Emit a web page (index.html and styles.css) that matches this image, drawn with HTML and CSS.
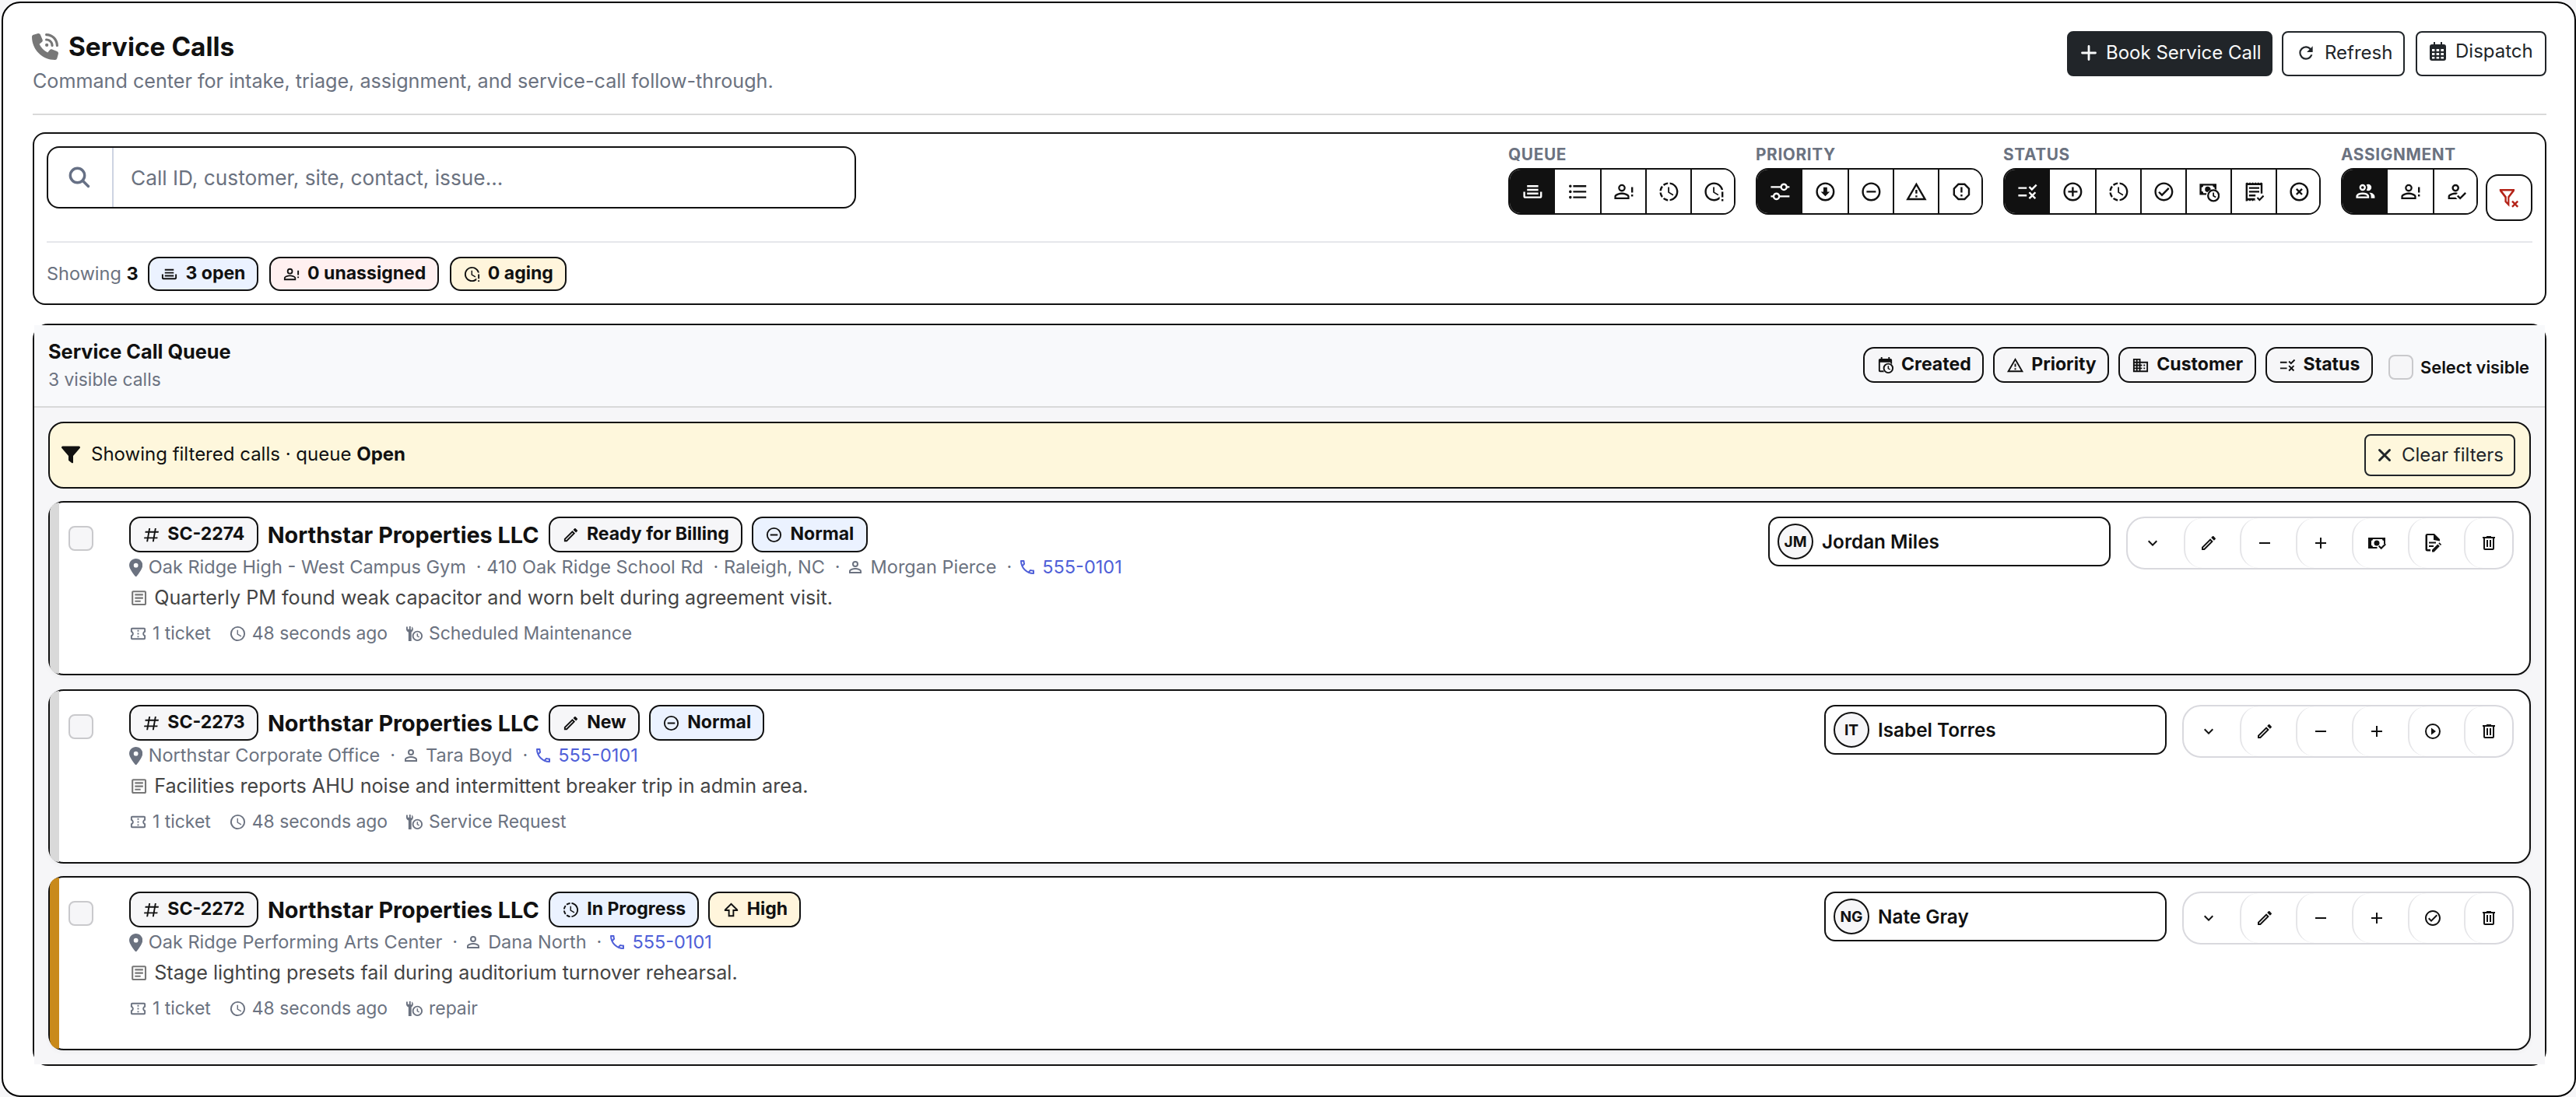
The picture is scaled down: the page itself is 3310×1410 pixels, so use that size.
FILE: index.html
```html
<!DOCTYPE html>
<html lang="en">
  <head>
    <meta charset="UTF-8" />
    <meta name="viewport" content="width=device-width, initial-scale=1" />
    <title>Service Calls</title>
    <link rel="stylesheet" href="styles.css">
  </head>
  <body>
    <!-- icon sprite -->
    <svg class="sprite" xmlns="http://www.w3.org/2000/svg">
      <symbol id="i-phone-volume" viewBox="0 0 512 512"><path d="M280 0C408.1 0 512 103.9 512 232c0 13.3-10.7 24-24 24s-24-10.7-24-24c0-101.6-82.4-184-184-184c-13.3 0-24-10.7-24-24s10.7-24 24-24zm8 192a32 32 0 1 1 0 64 32 32 0 1 1 0-64zm-32-72c0-13.3 10.7-24 24-24c75.1 0 136 60.9 136 136c0 13.3-10.7 24-24 24s-24-10.7-24-24c0-48.6-39.4-88-88-88c-13.3 0-24-10.7-24-24zM117.5 1.4c19.4-5.3 39.7 4.6 47.4 23.2l40 96c6.8 16.3 2.1 35.2-11.6 46.3L144 207.3c33.3 70.4 90.3 127.4 160.7 160.7L345 318.7c11.2-13.7 30-18.4 46.3-11.6l96 40c18.6 7.7 28.5 28 23.2 47.4l-24 88C481.8 499.9 466 512 448 512C200.6 512 0 311.4 0 64C0 46 12.1 30.2 29.5 25.4l88-24z"/></symbol>
      <symbol id="i-plus-lg" viewBox="0 0 20 20"><path d="M10 1.5v17M1.5 10h17" fill="none" stroke="currentColor" stroke-width="2.8" stroke-linecap="round"/></symbol>
      <symbol id="i-refresh" viewBox="0 0 24 24"><path d="M17.65,6.35C16.2,4.9 14.21,4 12,4A8,8 0 0,0 4,12A8,8 0 0,0 12,20C15.73,20 18.84,17.45 19.73,14H17.65C16.83,16.33 14.61,18 12,18A6,6 0 0,1 6,12A6,6 0 0,1 12,6C13.66,6 15.14,6.69 16.22,7.78L13,11H20V4L17.65,6.35Z"/></symbol>
      <symbol id="i-calendar-days" viewBox="0 0 21 24"><path fill-rule="evenodd" d="M5 0h2v3h7V0h2v3h2a3 3 0 0 1 3 3v15a3 3 0 0 1-3 3H3a3 3 0 0 1-3-3V6a3 3 0 0 1 3-3h2zM3 9v3h3.4V9zm5.6 0v3h3.6V9zm5.8 0v3H18V9zM3 14v3h3.4v-3zm5.6 0v3h3.6v-3zm5.8 0v3H18v-3zM3 19v2.6h3.4V19zm5.6 0v2.6h3.6V19zm5.8 0v2.6H18V19z"/></symbol>
      <symbol id="i-search" viewBox="0 0 28 28"><g fill="none" stroke="currentColor" stroke-width="3.4" stroke-linecap="round"><circle cx="11.5" cy="11.5" r="9.2"/><path d="M18.5 18.5l7 7"/></g></symbol>
      <symbol id="i-tray" viewBox="0 0 24 24"><path d="M18 5H6V7H18M6 9H18V11H6M2 12H4V17H20V12H22V17C22 18.11 21.11 19 20 19H4C2.9 19 2 18.11 2 17M18 13H6V15H18Z"/></symbol>
      <symbol id="i-list" viewBox="0 0 24 24"><path d="M7,5H21V7H7V5M7,13V11H21V13H7M4,4.5A1.5,1.5 0 0,1 5.5,6A1.5,1.5 0 0,1 4,7.5A1.5,1.5 0 0,1 2.5,6A1.5,1.5 0 0,1 4,4.5M4,10.5A1.5,1.5 0 0,1 5.5,12A1.5,1.5 0 0,1 4,13.5A1.5,1.5 0 0,1 2.5,12A1.5,1.5 0 0,1 4,10.5M7,19V17H21V19H7M4,16.5A1.5,1.5 0 0,1 5.5,18A1.5,1.5 0 0,1 4,19.5A1.5,1.5 0 0,1 2.5,18A1.5,1.5 0 0,1 4,16.5Z"/></symbol>
      <symbol id="i-account-alert" viewBox="0 0 24 24"><path d="M20 12V7H22V13H20M20 17H22V15H20M10 13C12.67 13 18 14.34 18 17V20H2V17C2 14.34 7.33 13 10 13M10 4A4 4 0 0 1 14 8A4 4 0 0 1 10 12A4 4 0 0 1 6 8A4 4 0 0 1 10 4M10 14.9C7.03 14.9 3.9 16.36 3.9 17V18.1H16.1V17C16.1 16.36 12.97 14.9 10 14.9M10 5.9A2.1 2.1 0 0 0 7.9 8A2.1 2.1 0 0 0 10 10.1A2.1 2.1 0 0 0 12.1 8A2.1 2.1 0 0 0 10 5.9Z"/></symbol>
      <symbol id="i-progress-clock" viewBox="0 0 24 24"><path d="M13,2.03V2.05L13,4.05C17.39,4.59 20.5,8.58 19.96,12.97C19.5,16.61 16.64,19.5 13,19.93V21.93C18.5,21.38 22.5,16.5 21.95,11C21.5,6.25 17.73,2.5 13,2.03M11,2.06C9.05,2.25 7.19,3 5.67,4.26L7.1,5.74C8.22,4.84 9.57,4.26 11,4.06V2.06M4.26,5.67C3,7.19 2.25,9.04 2.05,11H4.05C4.24,9.58 4.8,8.23 5.69,7.1L4.26,5.67M2.06,13C2.26,14.96 3.03,16.81 4.27,18.33L5.69,16.9C4.81,15.77 4.24,14.42 4.06,13H2.06M7.1,18.37L5.67,19.74C7.18,21 9.04,21.79 11,22V20C9.58,19.82 8.23,19.25 7.1,18.37M12.5,7V12.25L17,14.92L16.25,16.15L11,13V7H12.5Z"/></symbol>
      <symbol id="i-clock-alert" viewBox="0 0 24 24"><path d="M11 7V13L16.2 16.1L17 14.9L12.5 12.2V7H11M20 12V18H22V12H20M20 20V22H22V20H20M18 20C16.3 21.3 14.3 22 12 22C6.5 22 2 17.5 2 12S6.5 2 12 2C16.8 2 20.9 5.4 21.8 10H19.7C18.8 6.6 15.7 4 12 4C7.6 4 4 7.6 4 12S7.6 20 12 20C14.4 20 16.5 18.9 18 17.3V20Z"/></symbol>
      <symbol id="i-tune" viewBox="0 0 24 24"><path d="M8 13C6.14 13 4.59 14.28 4.14 16H2V18H4.14C4.59 19.72 6.14 21 8 21S11.41 19.72 11.86 18H22V16H11.86C11.41 14.28 9.86 13 8 13M8 19C6.9 19 6 18.1 6 17C6 15.9 6.9 15 8 15S10 15.9 10 17C10 18.1 9.1 19 8 19M19.86 6C19.41 4.28 17.86 3 16 3S12.59 4.28 12.14 6H2V8H12.14C12.59 9.72 14.14 11 16 11S19.41 9.72 19.86 8H22V6H19.86M16 9C14.9 9 14 8.1 14 7C14 5.9 14.9 5 16 5S18 5.9 18 7C18 8.1 17.1 9 16 9Z"/></symbol>
      <symbol id="i-down-circle" viewBox="0 0 24 24"><circle cx="12" cy="12" r="9" fill="none" stroke="currentColor" stroke-width="2"/><path d="M10 7.2h4v4.8h2.8L12 16.9 7.2 12H10z"/></symbol>
      <symbol id="i-minus-circle" viewBox="0 0 24 24"><path d="M12,20C7.59,20 4,16.41 4,12C4,7.59 7.59,4 12,4C16.41,4 20,7.59 20,12C20,16.41 16.41,20 12,20M12,2A10,10 0 0,0 2,12A10,10 0 0,0 12,22A10,10 0 0,0 22,12A10,10 0 0,0 12,2M7,13H17V11H7"/></symbol>
      <symbol id="i-plus-circle" viewBox="0 0 24 24"><path d="M12,20C7.59,20 4,16.41 4,12C4,7.59 7.59,4 12,4C16.41,4 20,7.59 20,12C20,16.41 16.41,20 12,20M12,2A10,10 0 0,0 2,12A10,10 0 0,0 12,22A10,10 0 0,0 22,12A10,10 0 0,0 12,2M13,7H11V11H7V13H11V17H13V13H17V11H13V7Z"/></symbol>
      <symbol id="i-alert" viewBox="0 0 24 24"><path d="M12,2L1,21H23M12,6L19.53,19H4.47M11,10V14H13V10M11,16V18H13V16"/></symbol>
      <symbol id="i-octagon" viewBox="0 0 24 24"><path d="M8.27,3L3,8.27V15.73L8.27,21H15.73L21,15.73V8.27L15.73,3M9.1,5H14.9L19,9.1V14.9L14.9,19H9.1L5,14.9V9.1M11,15H13V17H11V15M11,7H13V13H11V7"/></symbol>
      <symbol id="i-list-status" viewBox="0 0 24 24"><path d="M16.5 11L13 7.5L14.4 6.1L16.5 8.2L20.7 4L22.1 5.4L16.5 11M11 7H2V9H11V7M21 13.4L19.6 12L17 14.6L14.4 12L13 13.4L15.6 16L13 18.6L14.4 20L17 17.4L19.6 20L21 18.6L18.4 16L21 13.4M11 15H2V17H11V15Z"/></symbol>
      <symbol id="i-check-circle" viewBox="0 0 24 24"><path d="M12 2C6.5 2 2 6.5 2 12S6.5 22 12 22 22 17.5 22 12 17.5 2 12 2M12 20C7.59 20 4 16.41 4 12S7.59 4 12 4 20 7.59 20 12 16.41 20 12 20M16.59 7.58L10 14.17L7.41 11.59L6 13L10 17L18 9L16.59 7.58Z"/></symbol>
      <symbol id="i-cash-clock" viewBox="0 0 24 24"><path fill-rule="evenodd" d="M2 3.5h18v6.4a7.6 7.6 0 0 0-2-.7V7.5a2 2 0 0 1-2-2H6a2 2 0 0 1-2 2v4a2 2 0 0 1 2 2h3.4a8 8 0 0 0-.3 2H2zM11 6.5a3 3 0 0 1 2.8 3.7 7.6 7.6 0 0 0-3.4 2.3A3 3 0 0 1 11 6.5z"/><circle cx="16.8" cy="16.2" r="5.8" fill="none" stroke="currentColor" stroke-width="1.9"/><path d="M16 13h1.5v3l2.2 1.3-.8 1.2-2.9-1.7z"/></symbol>
      <symbol id="i-invoice-check" viewBox="0 0 24 24"><path fill-rule="evenodd" d="M3 22V3l1.4-1 1.6 1 1.5-1L9 3l1.5-1L12 3l1.5-1L15 3l1.5-1L18 3l1.5-1L21 3v11h-2V5H5v14h8v3l-1-1-1.5 1L9 21l-1.5 1L6 21l-1.5 1zM6.5 7h11v2h-11zm0 4h11v2h-11zm0 4h7v2h-7z"/><path d="M17.8 22l-3-3.1 1.2-1.2 1.8 1.8 3.7-3.8 1.2 1.4z"/></symbol>
      <symbol id="i-close-circle" viewBox="0 0 24 24"><circle cx="12" cy="12" r="9" fill="none" stroke="currentColor" stroke-width="2"/><path d="M9 9l6 6M15 9l-6 6" stroke="currentColor" stroke-width="2"/></symbol>
      <symbol id="i-accounts" viewBox="0 0 24 24"><path d="M13.07 10.41A5 5 0 0 0 13.07 4.59A3.39 3.39 0 0 1 15 4A3.5 3.5 0 0 1 15 11A3.39 3.39 0 0 1 13.07 10.41M5.5 7.5A3.5 3.5 0 1 1 9 11A3.5 3.5 0 0 1 5.5 7.5M7.5 7.5A1.5 1.5 0 1 0 9 6A1.5 1.5 0 0 0 7.5 7.5M16 17V19H2V17S2 13 9 13 16 17 16 17M14 17C13.86 16.22 12.67 15 9 15S4.07 16.31 4 17M15.95 13A5.32 5.32 0 0 1 18 17V19H22V17S22 13.37 15.94 13Z"/></symbol>
      <symbol id="i-account-check" viewBox="0 0 24 24"><path d="M21.1 12.5L22.5 13.91L15.97 20.5L12.5 17L13.9 15.59L15.97 17.67L21.1 12.5M11 4A4 4 0 0 1 15 8A4 4 0 0 1 11 12A4 4 0 0 1 7 8A4 4 0 0 1 11 4M11 6A2 2 0 0 0 9 8A2 2 0 0 0 11 10A2 2 0 0 0 13 8A2 2 0 0 0 11 6M11 13C11.68 13 12.5 13.09 13.41 13.26L11.74 14.93L11 14.9C8.03 14.9 4.9 16.36 4.9 17V18.1H11.1L13 20H3V17C3 14.34 8.33 13 11 13Z"/></symbol>
      <symbol id="i-filter-remove" viewBox="0 0 24 24"><path fill-rule="evenodd" d="M1.5 2.5h16v2.1L12 11.7v9.8l-5-5.2v-4.6L1.5 4.6zm2.8 2L9 10.6v4.9l1.2 1.2v-6l4.6-6.2z"/><path d="M15 15.5l6 6M21 15.5l-6 6" stroke="currentColor" stroke-width="2"/></symbol>
      <symbol id="i-calendar-clock" viewBox="0 0 24 24"><path fill-rule="evenodd" d="M6 1h2v2h8V1h2v2h1a2 2 0 0 1 2 2v5.7a7.2 7.2 0 0 0-2-1.2V8H5v11h4.3a7 7 0 0 0 1.2 2H5a2 2 0 0 1-2-2V5a2 2 0 0 1 2-2h1z"/><circle cx="16" cy="16" r="6" fill="none" stroke="currentColor" stroke-width="2"/><path d="M15.2 12.8h1.6v3l2 1.3-.8 1.2-2.8-1.7z"/></symbol>
      <symbol id="i-building" viewBox="0 0 24 24"><path fill-rule="evenodd" d="M2 3h10v4h10v14H2zm2 2v2h2V5zm4 0v2h2V5zM4 9v2h2V9zm4 0v2h2V9zm-4 4v2h2v-2zm4 0v2h2v-2zm-4 4v2h2v-2zm4 0v2h2v-2zm4-8v2h2v2h-2v2h2v2h-2v2h8V9zm4 2h2v2h-2zm0 4h2v2h-2z"/></symbol>
      <symbol id="i-funnel" viewBox="0 0 24 24"><path d="M1.5 1.5h21a1.6 1.6 0 0 1 1.1 2.6L15 14v8.2c0 1-1 1.5-1.8.9L9.6 20.3a1.6 1.6 0 0 1-.6-1.3v-5L.4 4.1a1.6 1.6 0 0 1 1.1-2.6z"/></symbol>
      <symbol id="i-close" viewBox="0 0 24 24"><path d="M5.5 5.5l13 13M18.5 5.5l-13 13" fill="none" stroke="currentColor" stroke-width="3" stroke-linecap="round"/></symbol>
      <symbol id="i-pound" viewBox="0 0 24 24"><path d="M5.41 21L6.12 17H2.12L2.47 15H6.47L7.53 9H3.53L3.88 7H7.88L8.59 3H10.59L9.88 7H15.88L16.59 3H18.59L17.88 7H21.88L21.53 9H17.53L16.47 15H20.47L20.12 17H16.12L15.41 21H13.41L14.12 17H8.12L7.41 21H5.41M9.53 9L8.47 15H14.47L15.53 9H9.53Z"/></symbol>
      <symbol id="i-pencil" viewBox="0 0 24 24"><path d="M14.06,9L15,9.94L5.92,19H5V18.08L14.06,9M17.66,3C17.41,3 17.15,3.1 16.96,3.29L15.13,5.12L18.88,8.87L20.71,7.04C21.1,6.65 21.1,6 20.71,5.63L18.37,3.29C18.17,3.09 17.92,3 17.66,3M14.06,6.19L3,17.25V21H6.75L17.81,9.94L14.06,6.19Z"/></symbol>
      <symbol id="i-pin" viewBox="0 0 384 512"><path d="M215.7 499.2C267 435 384 279.4 384 192C384 86 298 0 192 0S0 86 0 192c0 87.4 117 243 168.3 307.2c12.3 15.3 35.1 15.3 47.4 0zM192 128a64 64 0 1 1 0 128 64 64 0 1 1 0-128z"/></symbol>
      <symbol id="i-account" viewBox="0 0 24 24"><path d="M12,4A4,4 0 0,1 16,8A4,4 0 0,1 12,12A4,4 0 0,1 8,8A4,4 0 0,1 12,4M12,6A2,2 0 0,0 10,8A2,2 0 0,0 12,10A2,2 0 0,0 14,8A2,2 0 0,0 12,6M12,13C14.67,13 20,14.33 20,17V20H4V17C4,14.33 9.33,13 12,13M12,14.9C9.03,14.9 5.9,16.36 5.9,17V18.1H18.1V17C18.1,16.36 14.97,14.9 12,14.9Z"/></symbol>
      <symbol id="i-phone" viewBox="0 0 24 24"><path d="M20,15.5C18.8,15.5 17.5,15.3 16.4,14.9C16.3,14.9 16.2,14.9 16.1,14.9C15.8,14.9 15.6,15 15.4,15.2L13.2,17.4C10.4,15.9 8,13.6 6.6,10.8L8.8,8.6C9.1,8.3 9.2,7.9 9,7.6C8.7,6.5 8.5,5.2 8.5,4C8.5,3.5 8,3 7.5,3H4C3.5,3 3,3.5 3,4C3,13.4 10.6,21 20,21C20.5,21 21,20.5 21,20V16.5C21,16 20.5,15.5 20,15.5M5,5H6.5C6.6,5.9 6.8,6.8 7,7.6L5.8,8.8C5.4,7.6 5.1,6.3 5,5M19,19C17.7,18.9 16.4,18.6 15.2,18.2L16.4,17C17.2,17.2 18.1,17.4 19,17.4V19Z"/></symbol>
      <symbol id="i-text-box" viewBox="0 0 24 24"><path d="M5,3C3.89,3 3,3.89 3,5V19C3,20.11 3.89,21 5,21H19C20.11,21 21,20.11 21,19V5C21,3.89 20.11,3 19,3H5M5,5H19V19H5V5M7,7V9H17V7H7M7,11V13H17V11H7M7,15V17H14V15H7Z"/></symbol>
      <symbol id="i-ticket" viewBox="0 0 24 24"><path d="M4,4A2,2 0 0,0 2,6V10A2,2 0 0,1 4,12A2,2 0 0,1 2,14V18A2,2 0 0,0 4,20H20A2,2 0 0,0 22,18V14A2,2 0 0,1 20,12A2,2 0 0,1 22,10V6A2,2 0 0,0 20,4H4M4,6H20V8.54C18.76,9.25 18,10.57 18,12C18,13.43 18.76,14.75 20,15.46V18H4V15.46C5.24,14.75 6,13.43 6,12C6,10.57 5.24,9.25 4,8.54V6M11,15H13V17H11V15M11,11H13V13H11V11M11,7H13V9H11V7Z"/></symbol>
      <symbol id="i-clock" viewBox="0 0 24 24"><path d="M12,20A8,8 0 0,0 20,12A8,8 0 0,0 12,4A8,8 0 0,0 4,12A8,8 0 0,0 12,20M12,2A10,10 0 0,1 22,12A10,10 0 0,1 12,22C6.47,22 2,17.5 2,12A10,10 0 0,1 12,2M12.5,7V12.25L17,14.92L16.25,16.15L11,13V7H12.5Z"/></symbol>
      <symbol id="i-wrench-clock" viewBox="0 0 24 24"><path d="M1 6.2V2.5h2V6h2V2h2v4.5h1.5v-4C10 3.2 10.5 5 10.3 6.6 10 8.3 9 9.3 8 10v12H4V10C2.5 9.3 1.3 8 1 6.2z"/><circle cx="16" cy="15" r="6" fill="none" stroke="currentColor" stroke-width="2"/><path d="M15.2 11.8h1.6v3l2 1.3-.8 1.2-2.8-1.7z"/></symbol>
      <symbol id="i-arrow-up" viewBox="0 0 24 24"><path fill-rule="evenodd" d="M12 2.5L21 11.5v2h-5V21H8v-7.500H3v-2zM12 5.4L6 11.5h4V19h4v-7.5h4z"/></symbol>
      <symbol id="i-chevron" viewBox="0 0 24 24"><path d="M7.41,8.58L12,13.17L16.59,8.58L18,10L12,16L6,10L7.41,8.58Z"/></symbol>
      <symbol id="i-minus" viewBox="0 0 24 24"><path d="M19,13H5V11H19V13Z"/></symbol>
      <symbol id="i-plus" viewBox="0 0 24 24"><path d="M19,13H13V19H11V13H5V11H11V5H13V11H19V13Z"/></symbol>
      <symbol id="i-cash-check" viewBox="0 0 24 24"><path fill-rule="evenodd" d="M1 5h22v8h-2V9a2 2 0 0 1-2-2H7a2 2 0 0 1-2 2v6a2 2 0 0 1 2 2h5.5v2H1zM12 8.5a3.5 3.5 0 1 1 0 7 3.5 3.5 0 0 1 0-7z"/><path d="M17.7 20.2l-3.7-3.7 1.4-1.5 2.3 2.3 4.8-4.9 1.5 1.5z"/></symbol>
      <symbol id="i-file-edit" viewBox="0 0 24 24"><path d="M5 0h9l7 7v2.500L13 8V2H5v18h4v2.500H5a2.500 2.500 0 0 1-2.500-2.500V2.500A2.500 2.500 0 0 1 5 0zM7 10.500h9v2H7zm0 4.500h6v2H7zM11 23.500v-2.800l7.300-7.300 2.600 2.600-7.300 7.500zM19.300 12.500l1.300-1.200 2.600 2.600-1.300 1.200z"/></symbol>
      <symbol id="i-trash" viewBox="0 0 24 24"><path d="M9,3V4H4V6H5V19A2,2 0 0,0 7,21H17A2,2 0 0,0 19,19V6H20V4H15V3H9M7,6H17V19H7V6M9,8V17H11V8H9M13,8V17H15V8H13Z"/></symbol>
      <symbol id="i-play-circle" viewBox="0 0 24 24"><circle cx="12" cy="12" r="9" fill="none" stroke="currentColor" stroke-width="2"/><path d="M10 7.5L16 12L10 16.5Z"/></symbol>
    </svg>

    <main class="shell">
      <header class="page-head">
        <div>
          <h1><svg class="title-icon"><use href="#i-phone-volume"/></svg>Service Calls</h1>
          <p class="lead">Command center for intake, triage, assignment, and service-call follow-through.</p>
        </div>
        <div class="head-actions">
          <button class="btn btn-dark"><svg class="ic-20"><use href="#i-plus-lg"/></svg>Book Service Call</button>
          <button class="btn btn-refresh"><svg class="ic-26"><use href="#i-refresh"/></svg>Refresh</button>
          <button class="btn btn-dispatch"><svg class="ic-cal"><use href="#i-calendar-days"/></svg>Dispatch</button>
        </div>
      </header>

      <section class="filters">
        <div class="filter-row">
          <div class="search">
            <span class="search-icon"><svg><use href="#i-search"/></svg></span>
            <input type="text" placeholder="Call ID, customer, site, contact, issue..." />
          </div>
          <div class="groups">
            <div>
              <div class="group-label">Queue</div>
              <div class="btn-group">
                <button class="active"><svg><use href="#i-tray"/></svg></button>
                <button><svg><use href="#i-list"/></svg></button>
                <button><svg><use href="#i-account-alert"/></svg></button>
                <button><svg><use href="#i-progress-clock"/></svg></button>
                <button><svg><use href="#i-clock-alert"/></svg></button>
              </div>
            </div>
            <div>
              <div class="group-label">Priority</div>
              <div class="btn-group">
                <button class="active"><svg><use href="#i-tune"/></svg></button>
                <button><svg><use href="#i-down-circle"/></svg></button>
                <button><svg><use href="#i-minus-circle"/></svg></button>
                <button><svg><use href="#i-alert"/></svg></button>
                <button><svg><use href="#i-octagon"/></svg></button>
              </div>
            </div>
            <div>
              <div class="group-label">Status</div>
              <div class="btn-group">
                <button class="active"><svg><use href="#i-list-status"/></svg></button>
                <button><svg><use href="#i-plus-circle"/></svg></button>
                <button><svg><use href="#i-progress-clock"/></svg></button>
                <button><svg><use href="#i-check-circle"/></svg></button>
                <button><svg><use href="#i-cash-clock"/></svg></button>
                <button><svg><use href="#i-invoice-check"/></svg></button>
                <button><svg><use href="#i-close-circle"/></svg></button>
              </div>
            </div>
            <div>
              <div class="group-label">Assignment</div>
              <div class="btn-group">
                <button class="active"><svg><use href="#i-accounts"/></svg></button>
                <button><svg><use href="#i-account-alert"/></svg></button>
                <button><svg><use href="#i-account-check"/></svg></button>
              </div>
            </div>
            <button class="reset"><svg><use href="#i-filter-remove"/></svg></button>
          </div>
        </div>
        <div class="summary">
          <span class="showing">Showing <b>3</b></span>
          <span class="chip blue"><svg><use href="#i-tray"/></svg>3 open</span>
          <span class="chip red"><svg><use href="#i-account-alert"/></svg>0 unassigned</span>
          <span class="chip yellow"><svg><use href="#i-clock-alert"/></svg>0 aging</span>
        </div>
      </section>

      <section class="queue">
        <div class="queue-head">
          <div>
            <h2>Service Call Queue</h2>
            <p>3 visible calls</p>
          </div>
          <div class="sorts">
            <button class="chip"><svg><use href="#i-calendar-clock"/></svg>Created</button>
            <button class="chip"><svg><use href="#i-alert"/></svg>Priority</button>
            <button class="chip"><svg><use href="#i-building"/></svg>Customer</button>
            <button class="chip"><svg><use href="#i-list-status"/></svg>Status</button>
            <label class="select-all"><span class="check"></span>Select visible</label>
          </div>
        </div>

        <div class="queue-body">
          <div class="banner">
            <svg class="ic-24"><use href="#i-funnel"/></svg>
            <span>Showing filtered calls · queue <b>Open</b></span>
            <button class="btn btn-clear"><svg class="ic-24"><use href="#i-close"/></svg>Clear filters</button>
          </div>

          <article class="call">
            <span class="check"></span>
            <div class="call-main">
              <div class="call-title">
                <span class="chip"><svg><use href="#i-pound"/></svg>SC-2274</span>
                <h3>Northstar Properties LLC</h3>
                <span class="chip"><svg><use href="#i-pencil"/></svg>Ready for Billing</span>
                <span class="chip blue"><svg><use href="#i-minus-circle"/></svg>Normal</span>
              </div>
              <div class="call-site">
                <span><svg class="pin"><use href="#i-pin"/></svg>Oak Ridge High - West Campus Gym</span>
                <span>· 410 Oak Ridge School Rd</span>
                <span>· Raleigh, NC</span>
                <span>·<svg><use href="#i-account"/></svg>Morgan Pierce</span>
                <span>·<a href="#"><svg><use href="#i-phone"/></svg>555-0101</a></span>
              </div>
              <div class="call-issue"><svg><use href="#i-text-box"/></svg>Quarterly PM found weak capacitor and worn belt during agreement visit.</div>
              <div class="call-meta">
                <span><svg><use href="#i-ticket"/></svg>1 ticket</span>
                <span><svg><use href="#i-clock"/></svg>48 seconds ago</span>
                <span><svg><use href="#i-wrench-clock"/></svg>Scheduled Maintenance</span>
              </div>
            </div>
            <div class="assignee"><span class="avatar">JM</span>Jordan Miles</div>
            <div class="tools">
              <button><svg><use href="#i-chevron"/></svg></button>
              <button><svg><use href="#i-pencil"/></svg></button>
              <button><svg><use href="#i-minus"/></svg></button>
              <button><svg><use href="#i-plus"/></svg></button>
              <button><svg><use href="#i-cash-check"/></svg></button>
              <button><svg><use href="#i-file-edit"/></svg></button>
              <button><svg><use href="#i-trash"/></svg></button>
            </div>
          </article>

          <article class="call">
            <span class="check"></span>
            <div class="call-main">
              <div class="call-title">
                <span class="chip"><svg><use href="#i-pound"/></svg>SC-2273</span>
                <h3>Northstar Properties LLC</h3>
                <span class="chip"><svg><use href="#i-pencil"/></svg>New</span>
                <span class="chip blue"><svg><use href="#i-minus-circle"/></svg>Normal</span>
              </div>
              <div class="call-site">
                <span><svg class="pin"><use href="#i-pin"/></svg>Northstar Corporate Office</span>
                <span>·<svg><use href="#i-account"/></svg>Tara Boyd</span>
                <span>·<a href="#"><svg><use href="#i-phone"/></svg>555-0101</a></span>
              </div>
              <div class="call-issue"><svg><use href="#i-text-box"/></svg>Facilities reports AHU noise and intermittent breaker trip in admin area.</div>
              <div class="call-meta">
                <span><svg><use href="#i-ticket"/></svg>1 ticket</span>
                <span><svg><use href="#i-clock"/></svg>48 seconds ago</span>
                <span><svg><use href="#i-wrench-clock"/></svg>Service Request</span>
              </div>
            </div>
            <div class="assignee"><span class="avatar">IT</span>Isabel Torres</div>
            <div class="tools">
              <button><svg><use href="#i-chevron"/></svg></button>
              <button><svg><use href="#i-pencil"/></svg></button>
              <button><svg><use href="#i-minus"/></svg></button>
              <button><svg><use href="#i-plus"/></svg></button>
              <button><svg><use href="#i-play-circle"/></svg></button>
              <button><svg><use href="#i-trash"/></svg></button>
            </div>
          </article>

          <article class="call high">
            <span class="check"></span>
            <div class="call-main">
              <div class="call-title">
                <span class="chip"><svg><use href="#i-pound"/></svg>SC-2272</span>
                <h3>Northstar Properties LLC</h3>
                <span class="chip blue"><svg><use href="#i-progress-clock"/></svg>In Progress</span>
                <span class="chip yellow"><svg><use href="#i-arrow-up"/></svg>High</span>
              </div>
              <div class="call-site">
                <span><svg class="pin"><use href="#i-pin"/></svg>Oak Ridge Performing Arts Center</span>
                <span>·<svg><use href="#i-account"/></svg>Dana North</span>
                <span>·<a href="#"><svg><use href="#i-phone"/></svg>555-0101</a></span>
              </div>
              <div class="call-issue"><svg><use href="#i-text-box"/></svg>Stage lighting presets fail during auditorium turnover rehearsal.</div>
              <div class="call-meta">
                <span><svg><use href="#i-ticket"/></svg>1 ticket</span>
                <span><svg><use href="#i-clock"/></svg>48 seconds ago</span>
                <span><svg><use href="#i-wrench-clock"/></svg>repair</span>
              </div>
            </div>
            <div class="assignee"><span class="avatar">NG</span>Nate Gray</div>
            <div class="tools">
              <button><svg><use href="#i-chevron"/></svg></button>
              <button><svg><use href="#i-pencil"/></svg></button>
              <button><svg><use href="#i-minus"/></svg></button>
              <button><svg><use href="#i-plus"/></svg></button>
              <button><svg><use href="#i-check-circle"/></svg></button>
              <button><svg><use href="#i-trash"/></svg></button>
            </div>
          </article>
        </div>
      </section>
    </main>
  </body>
</html>
```
FILE: styles.css
```css
* {
  box-sizing: border-box;
}
body {
  margin: 0;
  padding: 2px 0 0 2px;
  height: 1410px;
  background: #f6f6f8;
  color: #111;
  font: 24px/1.5 Inter, "Liberation Sans", sans-serif;
}
h1, h2, h3, p {
  margin: 0;
}
button {
  font: inherit;
  color: inherit;
  padding: 0;
}
svg {
  display: block;
  flex: none;
  fill: currentColor;
}
.sprite {
  position: absolute;
  width: 0;
  height: 0;
}
.shell {
  height: 1408px;
  padding: 36px 36px 0 38px;
  background: #fff;
  border: 2px solid #000;
  border-radius: 24px;
}

/* page header */
.page-head {
  display: flex;
  justify-content: space-between;
  height: 108px;
  border-bottom: 2px solid #d9d9d9;
}
h1 {
  display: flex;
  align-items: center;
  gap: 13px;
  height: 40px;
  font-size: 33.4px;
  font-weight: 700;
}
.title-icon {
  width: 34px;
  height: 34px;
  margin-left: -1px;
  color: #777;
}
.lead {
  font-size: 25.15px;
  line-height: 38px;
  margin-top: 5px;
  color: #6b7280;
}
.head-actions {
  display: flex;
  gap: 12px;
}
.btn {
  display: flex;
  align-items: center;
  height: 58px;
  padding: 0 16px 3px;
  gap: 12px;
  font-size: 24px;
  white-space: nowrap;
  color: #212529;
  background: transparent;
  border: 2px solid #212529;
  border-radius: 8px;
}
.btn-dark {
  width: 264px;
  background: #212529;
  color: #f8f9fa;
}
.btn-refresh {
  width: 158px;
  gap: 11px;
}
.btn-dispatch {
  width: 168px;
  padding-bottom: 7px;
  margin-left: 2px;
}
.ic-20 {
  width: 20px;
  height: 20px;
}
.ic-24 {
  width: 24px;
  height: 24px;
}
.ic-26 {
  width: 26px;
  height: 26px;
}
.ic-cal {
  width: 21px;
  height: 24px;
}

/* filters */
.filters {
  margin-top: 22px;
  height: 222px;
  padding: 16px;
  border: 2px solid #111;
  border-radius: 16px;
}
.filter-row {
  display: flex;
  justify-content: space-between;
  height: 122px;
}
.search {
  display: flex;
  width: 1040px;
  height: 80px;
  border: 2px solid #111;
  border-radius: 16px;
}
.search-icon {
  display: flex;
  align-items: center;
  width: 84px;
  padding-left: 26px;
  border-right: 2px solid #ced4e2;
  color: #667085;
}
.search-icon svg {
  width: 28px;
  height: 28px;
}
.search input {
  flex: 1;
  border: 0;
  outline: 0;
  padding: 2px 0 0 22px;
  background: none;
  font: inherit;
  font-size: 26.25px;
}
.search input::placeholder {
  color: #6b7280;
}
.groups {
  display: flex;
  gap: 26px;
}
.group-label {
  height: 22px;
  margin-bottom: 6px;
  font-size: 20.8px;
  font-weight: 700;
  line-height: 22px;
  letter-spacing: 0.03em;
  text-transform: uppercase;
  color: #6b7280;
}
.btn-group {
  display: flex;
  height: 60px;
  border: 2px solid #111;
  border-radius: 16px;
  overflow: hidden;
}
.btn-group button {
  display: flex;
  align-items: center;
  justify-content: center;
  width: 58px;
  background: #fff;
  border: 0;
  border-left: 2px solid #111;
}
.btn-group button.active {
  width: 58px;
  margin-right: -2px;
  background: #111;
  color: #fff;
  border-left: 0;
}
.btn-group button.active + button {
  width: 60px;
}
.btn-group button:last-child {
  width: 58px;
  margin-right: -2px;
}
.btn-group svg,
.reset svg {
  width: 28.8px;
  height: 28.8px;
}
.reset {
  display: flex;
  align-items: center;
  justify-content: center;
  width: 60px;
  height: 60px;
  margin: 36px 0 0 -16px;
  color: #b42318;
  background: #fff;
  border: 2px solid #111;
  border-radius: 16px;
}
.summary {
  display: flex;
  align-items: center;
  gap: 14px;
  padding-top: 18px;
  border-top: 2px solid #e5e7eb;
}
.showing {
  margin-right: -2px;
  font-size: 23.5px;
  color: #6b7280;
}
.showing b {
  color: #111;
}
.chip {
  display: inline-flex;
  align-items: center;
  height: 46px;
  padding: 0 14.8px;
  gap: 9px;
  font-size: 23.04px;
  font-weight: 700;
  line-height: 1;
  white-space: nowrap;
  color: #111;
  background: #f6f6f8;
  border: 2px solid #111;
  border-radius: 14px;
}
.chip svg {
  width: 23px;
  height: 23px;
}
.summary .chip {
  height: 44px;
}
.chip.blue {
  background: #ebf2ff;
}
.chip.red {
  background: #fff0f0;
}
.chip.yellow {
  background: #fff5dc;
}

/* queue panel: square inner backgrounds run over the rounded border */
.queue {
  margin-top: 24px;
  border: 2px solid #111;
  border-radius: 20px;
}
.queue-head {
  display: flex;
  align-items: center;
  justify-content: space-between;
  height: 106px;
  padding: 0 20px 0 18px;
  background: #f8f9fb;
  border-bottom: 2px solid #d9d9d9;
}
h2 {
  font-size: 25.3px;
  line-height: 36px;
}
.queue-head p {
  font-size: 22.8px;
  line-height: 36px;
  color: #6b7280;
}
.sorts {
  display: flex;
  align-items: center;
  gap: 12px;
  padding-bottom: 2px;
}
.select-all {
  display: flex;
  align-items: center;
  gap: 9px;
  margin: 6px 0 0 8px;
  font-size: 21.8px;
  font-weight: 600;
}
.check {
  flex: none;
  width: 32px;
  height: 32px;
  background: #f6f6f8;
  border: 2px solid #c9c9cc;
  border-radius: 8px;
}
.queue-body {
  padding: 18px;
  background: #f6f6f8;
}
.banner {
  display: flex;
  align-items: center;
  height: 86px;
  gap: 14px;
  padding: 0 18px 0 15px;
  margin-bottom: 16px;
  font-size: 24px;
  background: #fef7dc;
  border: 2px solid #111;
  border-radius: 20px;
}
.banner > svg,
.banner > span {
  margin-top: -3px;
}
.btn-clear {
  width: 194px;
  height: 54px;
  gap: 10px;
  padding: 0 12px 1px;
  margin-left: auto;
}

/* call cards */
.call {
  position: relative;
  display: flex;
  align-items: flex-start;
  height: 224px;
  padding: 18px 20px 0 24px;
  margin-bottom: 16px;
  background: #fff;
  border: 2px solid #111;
  border-radius: 20px;
  box-shadow: 0 2px 6px rgba(0, 0, 0, 0.04);
}
.banner + .call {
  margin-bottom: 18px;
}
.call:last-child {
  margin-bottom: 0;
}
.call::before {
  content: "";
  position: absolute;
  top: 0;
  bottom: 0;
  left: 0;
  width: 12px;
  background: #d9d9d9;
  border-radius: 20px 0 0 20px;
}
.call.high::before {
  background: #c98a1b;
}
.call .check {
  margin-top: 12px;
}
.call-main {
  flex: 1;
  padding-left: 46px;
}
.call-title {
  display: flex;
  align-items: center;
  gap: 12px;
  height: 46px;
}
.call-title .chip {
  padding: 0 15.3px;
}
h3 {
  padding-top: 2px;
  font-size: 28.8px;
  line-height: 46px;
}
.call-site {
  display: flex;
  align-items: center;
  gap: 13px;
  height: 38px;
  font-size: 23.5px;
  color: #6b7280;
}
.call-site span,
.call-site a {
  display: flex;
  align-items: center;
  gap: 7.5px;
}
.call-site a {
  color: #4f5fd8;
  text-decoration: none;
}
.call-site svg {
  width: 24px;
  height: 24px;
}
.call-site .pin {
  width: 17.3px;
  height: 23px;
}
.call-issue {
  display: flex;
  align-items: center;
  gap: 7px;
  height: 42px;
  font-size: 25.15px;
  color: #444;
}
.call-issue svg {
  width: 25.2px;
  height: 25.2px;
  color: #777;
}
.call-meta {
  display: flex;
  align-items: center;
  gap: 23px;
  height: 34px;
  margin-top: 7px;
  font-size: 22.9px;
  color: #6b7280;
}
.call-meta span {
  display: flex;
  align-items: center;
  gap: 7px;
}
.call-meta svg {
  width: 23px;
  height: 23px;
}
.assignee {
  display: flex;
  align-items: center;
  gap: 11px;
  width: 440px;
  height: 64px;
  margin-right: 20px;
  padding-left: 10px;
  font-weight: 600;
  font-size: 24.3px;
  border: 2px solid #111;
  border-radius: 14px;
}
.avatar {
  display: flex;
  align-items: center;
  justify-content: center;
  width: 46px;
  height: 46px;
  font-size: 19.2px;
  font-weight: 700;
  background: #f6f6f8;
  border: 2px solid #111;
  border-radius: 50%;
}
.tools {
  display: flex;
  gap: 10px;
  height: 68px;
  border: 2px solid #d9d9de;
  border-radius: 24px;
}
.tools button {
  display: flex;
  align-items: center;
  justify-content: center;
  width: 62px;
  background: none;
  border: 0;
  border-left: 2px solid #e5e5e8;
  border-radius: 24px;
}
.tools button:first-child {
  border-left-color: transparent;
}
.tools svg {
  width: 24px;
  height: 24px;
}
```
